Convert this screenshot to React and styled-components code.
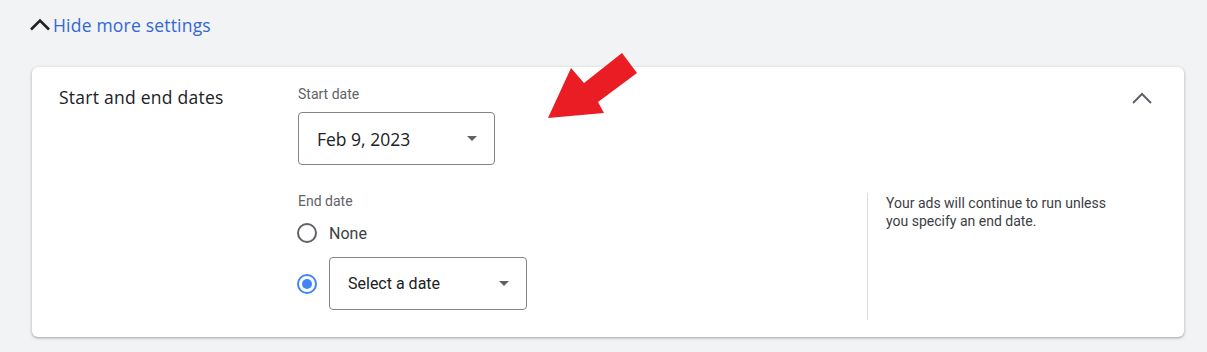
import React from "react";
import styled, { createGlobalStyle } from "styled-components";

const GlobalStyle = createGlobalStyle`
  body {
    margin: 0;
    background: #f1f3f4;
    font-family: Roboto, "Liberation Sans", sans-serif;
  }
`;

const Page = styled.div`
  position: relative;
  width: 1207px;
  height: 352px;
  padding: 14px 23px 0 32px;
  box-sizing: border-box;
`;

const Toggle = styled.div`
  display: flex;
  align-items: center;
  gap: 1px;
  height: 22px;
  margin-left: -4px;
  color: #3367d6;
  font-family: "Open Sans", sans-serif;
  font-size: 17.5px;
  font-weight: 500;
  letter-spacing: 0.2px;
  cursor: pointer;
`;

const Card = styled.div`
  margin-top: 31px;
  background: #fff;
  border-radius: 6px;
  box-shadow: 0 1px 2px rgba(60, 64, 67, 0.3), 0 1px 3px 1px rgba(60, 64, 67, 0.12);
  display: grid;
  grid-template-columns: 239px minmax(0, 1fr) auto;
  padding: 19px 29px 18px 27px;
  height: 270px;
  box-sizing: border-box;
`;

const Title = styled.div`
  font-family: "Open Sans", sans-serif;
  font-size: 17.5px;
  letter-spacing: 0.25px;
  color: #202124;
  line-height: 20px;
  margin-top: 1px;
`;

const Content = styled.div`
  display: flex;
  flex-direction: column;
  min-width: 0;
`;

const Label = styled.div`
  font-size: 14px;
  line-height: 16px;
  color: #5f6368;
  margin-bottom: ${(p) => p.$gap || 10}px;
`;

const Select = styled.div`
  width: ${(p) => p.$width}px;
  height: 53px;
  box-sizing: border-box;
  border: 1px solid #80868b;
  border-radius: 4px;
  display: flex;
  align-items: center;
  justify-content: space-between;
  padding: 0 17px 0 18px;
  font-family: ${(p) => (p.$google ? '"Open Sans", sans-serif' : "Roboto, sans-serif")};
  font-size: ${(p) => (p.$google ? 17.5 : 16)}px;
  color: #202124;
`;

const Caret = styled.span`
  width: 0;
  height: 0;
  border-left: 5.5px solid transparent;
  border-right: 5.5px solid transparent;
  border-top: 5.5px solid #5f6368;
`;

const EndSection = styled.div`
  display: flex;
  margin-top: 28px;
`;

const EndMain = styled.div`
  width: 569px;
  flex-shrink: 0;
  padding-bottom: 10px;
`;

const Help = styled.div`
  border-left: 1px solid #dadce0;
  padding: 1px 0 0 18px;
  width: 240px;
  font-size: 14px;
  line-height: 18px;
  color: #3c4043;
  white-space: nowrap;
`;

const RadioRow = styled.div`
  display: flex;
  align-items: center;
  gap: 12px;
  margin-top: ${(p) => p.$top}px;
  font-size: 16px;
  color: #3c4043;
`;

const Radio = styled.span`
  width: 20px;
  height: 20px;
  box-sizing: border-box;
  border-radius: 50%;
  border: 2px solid ${(p) => (p.$checked ? "#4285f4" : "#5f6368")};
  display: flex;
  align-items: center;
  justify-content: center;
  margin-left: -1px;
  &::after {
    content: "";
    width: 10px;
    height: 10px;
    border-radius: 50%;
    background: #4285f4;
    display: ${(p) => (p.$checked ? "block" : "none")};
  }
`;

const Chevron = styled.div`
  padding-top: 1px;
  margin-right: 1px;
`;

const Arrow = styled.svg`
  position: absolute;
  left: 0;
  top: 0;
  pointer-events: none;
`;

export default function App() {
  return (
    <>
      <GlobalStyle />
      <Page>
        <Toggle>
          <svg width="24" height="24" viewBox="0 0 24 24">
            <path d="M3 16.5 L12 7.5 L21 16.5" fill="none" stroke="#202124" strokeWidth="2.6" />
          </svg>
          Hide more settings
        </Toggle>
        <Card>
          <Title>Start and end dates</Title>
          <Content>
            <Label>Start date</Label>
            <Select $width={197} $google>
              Feb 9, 2023
              <Caret />
            </Select>
            <EndSection>
              <EndMain>
                <Label $gap={0}>End date</Label>
                <RadioRow $top={14}>
                  <Radio />
                  None
                </RadioRow>
                <RadioRow $top={14}>
                  <Radio $checked />
                  <Select $width={198}>
                    Select a date
                    <Caret />
                  </Select>
                </RadioRow>
              </EndMain>
              <Help>
                Your ads will continue to run unless
                <br />
                you specify an end date.
              </Help>
            </EndSection>
          </Content>
          <Chevron>
            <svg width="24" height="24" viewBox="0 0 24 24">
              <path d="M3 16 L12 7 L21 16" fill="none" stroke="#5f6368" strokeWidth="2" />
            </svg>
          </Chevron>
        </Card>
        <Arrow width="1207" height="352">
          <polygon
            points="548,118 571,68 584,83 622,53 637,73 598,102 604,113"
            fill="#ea1c24"
          />
        </Arrow>
      </Page>
    </>
  );
}
